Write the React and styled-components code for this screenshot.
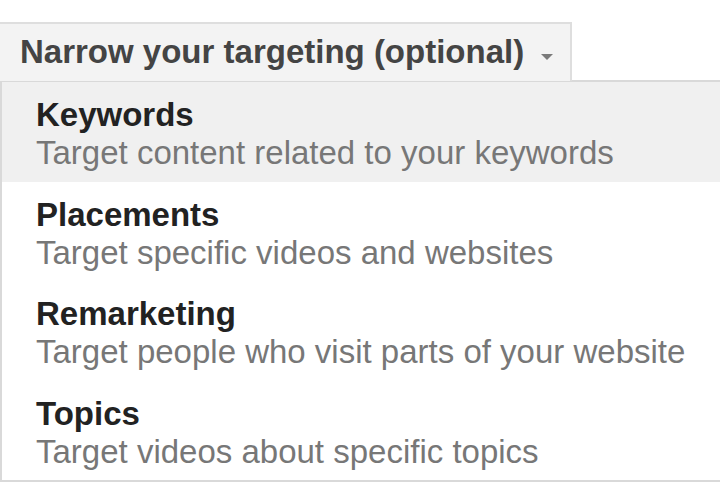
import React from 'react';
import styled, { createGlobalStyle } from 'styled-components';

const Global = createGlobalStyle`
  html, body {
    margin: 0;
    padding: 0;
    background: #fff;
    font-family: "Liberation Sans", Arial, sans-serif;
  }
`;

const Page = styled.div`
  padding-top: 22px;
  width: 720px;
  height: 483px;
  overflow: hidden;
  box-sizing: border-box;
`;

const Trigger = styled.div`
  display: inline-flex;
  align-items: center;
  box-sizing: border-box;
  width: 572px;
  height: 59px;
  padding: 0 0 2px 20px;
  background: #f3f3f3;
  border: 2px solid #dedede;
  border-left: none;
  border-bottom: none;
  color: #444;
  font-weight: bold;
  font-size: 33px;
  white-space: nowrap;
  margin-bottom: -1px;
  position: relative;
  z-index: 1;
`;

const Arrow = styled.span`
  width: 0;
  height: 0;
  margin-left: 17px;
  margin-top: 10px;
  border-left: 6px solid transparent;
  border-right: 6px solid transparent;
  border-top: 6px solid #7a7a7a;
`;

const Menu = styled.div`
  box-sizing: border-box;
  width: 722px;
  border: 2px solid #d9d9d9;
  border-right: none;
`;

const Item = styled.div`
  height: 99.5px;
  box-sizing: border-box;
  padding: 14px 0 0 34px;
  background: ${(p) => (p.$active ? '#f0f0f0' : '#fff')};
  font-size: 33px;
  line-height: 38px;
  white-space: nowrap;
`;

const Title = styled.div`
  font-weight: bold;
  color: #222;
`;

const Desc = styled.div`
  color: #777;
`;

const items = [
  { title: 'Keywords', desc: 'Target content related to your keywords', active: true },
  { title: 'Placements', desc: 'Target specific videos and websites' },
  { title: 'Remarketing', desc: 'Target people who visit parts of your website' },
  { title: 'Topics', desc: 'Target videos about specific topics' },
];

export default function App() {
  return (
    <Page>
      <Global />
      <Trigger>
        Narrow your targeting (optional)
        <Arrow />
      </Trigger>
      <Menu>
        {items.map((it) => (
          <Item key={it.title} $active={it.active}>
            <Title>{it.title}</Title>
            <Desc>{it.desc}</Desc>
          </Item>
        ))}
      </Menu>
    </Page>
  );
}
